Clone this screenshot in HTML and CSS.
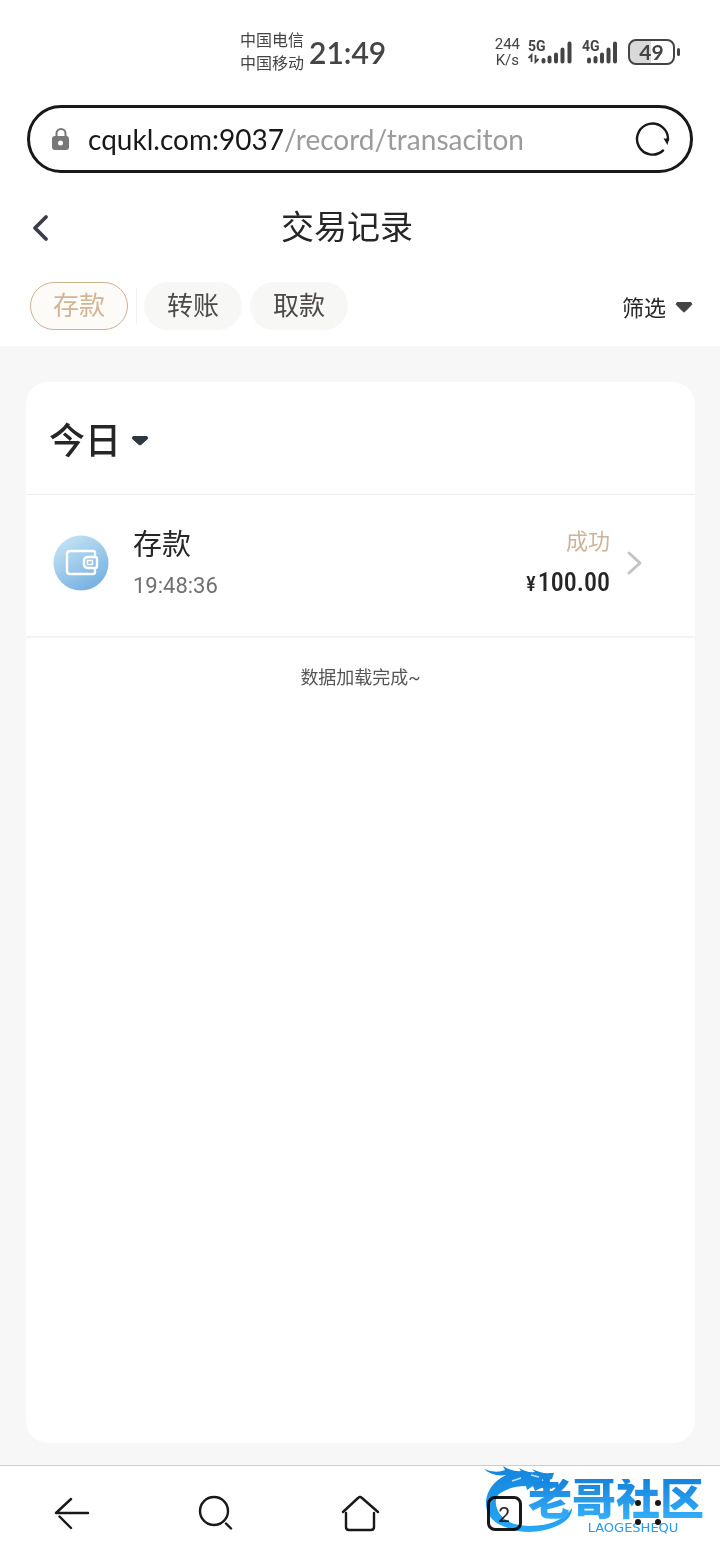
FILE: index.html
```html
<!DOCTYPE html>
<html lang="zh-CN">
<head>
<meta charset="utf-8">
<meta name="viewport" content="width=device-width, initial-scale=1">
<title>交易记录</title>
<link rel="stylesheet" href="styles.css">
</head>
<body>
<header class="top">
  <div class="status">
    <div class="carriers"><span>中国电信</span><span>中国移动</span></div>
    <time class="clock">21:49</time>
    <div class="indicators">
      <div class="speed"><span>244</span><span>K/s</span></div>
      <svg class="signal" width="46" height="28" viewBox="0 0 46 28" role="img" aria-label="5G">
        <text x="0" y="13" class="net">5G</text>
        <path d="M3.500 24v-7l-3 3M7.500 17v7l3-3" fill="none" stroke="#444" stroke-width="1.800"/>
        <path d="M15.500 22v1.500M21.500 19.500v4M28 16.500v7M34.500 11.500v12M41.500 5.500v18" stroke="#444" stroke-width="4" stroke-linecap="round"/>
      </svg>
      <svg class="signal" width="38" height="28" viewBox="0 0 38 28" role="img" aria-label="4G">
        <text x="0" y="13" class="net">4G</text>
        <path d="M7 21.500v2M13.500 20v3.500M20 16.500v7M26.500 11.500v12M33 5.500v18" stroke="#444" stroke-width="4" stroke-linecap="round"/>
      </svg>
      <div class="battery"><span>49</span></div>
    </div>
  </div>
  <button class="address" type="button">
    <svg width="20" height="24" viewBox="0 0 20 24" aria-hidden="true"><path d="M5.500 11V6.500a4.500 4.500 0 0 1 9 0V11" fill="none" stroke="#777" stroke-width="2"/><rect x="1" y="9" width="17" height="14" rx="3" fill="#777"/><circle cx="9.500" cy="16" r="2.500" fill="#fff"/></svg>
    <span class="url">cqukl.com:9037<span class="path">/record/transaciton</span></span>
    <svg width="36" height="36" viewBox="0 0 36 36" aria-hidden="true"><path d="M29 29.500A15.500 15.500 0 1 1 34 19" fill="none" stroke="#181818" stroke-width="2.400" stroke-linecap="round"/><path d="M29.500 17.500l5.500 0-1.500 6.500z" fill="#181818"/></svg>
  </button>
  <div class="titlebar">
    <button class="back" type="button" aria-label="返回"><svg width="20" height="30" viewBox="0 0 20 30"><path d="M16 4L5 15l11 11" fill="none" stroke="#3c3d4c" stroke-width="3.800" stroke-linecap="round" stroke-linejoin="round"/></svg></button>
    <h1>交易记录</h1>
  </div>
  <div class="filters">
    <button class="tab active" type="button">存款</button>
    <i class="divider"></i>
    <button class="tab" type="button">转账</button>
    <button class="tab" type="button">取款</button>
    <button class="filter" type="button">筛选<svg width="18" height="16" viewBox="0 0 18 16"><path d="M2 4.500h14l.8 2L10 13.500q-1 .8-2 0L1.200 6.500z" fill="#444" stroke="#444" stroke-linejoin="round"/></svg></button>
  </div>
</header>
<main>
  <section class="card">
    <h2><button class="day" type="button">今日<svg width="18" height="18" viewBox="0 0 18 18"><path d="M2 7.500h14l.8 2L10 15.500q-1 .8-2 0L1.200 9.500z" fill="#2d3840" stroke="#2d3840" stroke-linejoin="round"/></svg></button></h2>
    <a class="record" href="#">
      <svg width="56" height="56" viewBox="0 0 56 56" aria-hidden="true">
        <defs><linearGradient id="disc" x1="0.200" y1="0" x2="0.800" y2="1"><stop offset="0" stop-color="#c6e4f4"/><stop offset="1" stop-color="#71aee0"/></linearGradient></defs>
        <circle cx="28" cy="28" r="27.500" fill="url(#disc)"/>
        <path d="M42 22v-4q0-2-2-2H17q-3 0-3 3v17q0 3 3 3h23q2 0 2-2v-4M42 22h-7q-4 0-4 4v3q0 4 4 4h7q2 0 2-2v-7q0-2-2-2z" fill="none" stroke="#fff" stroke-width="2.400" stroke-linejoin="round"/>
        <rect x="34.500" y="25.500" width="5" height="4" fill="none" stroke="#fff" stroke-width="1.500"/>
      </svg>
      <div class="what"><strong>存款</strong><time>19:48:36</time></div>
      <div class="result"><span class="state">成功</span><span class="amount"><small>¥</small>100.00</span></div>
      <svg width="18" height="26" viewBox="0 0 18 26" aria-hidden="true"><path d="M3 3l11 10L3 23" fill="none" stroke="#c4c4c4" stroke-width="3" stroke-linecap="round" stroke-linejoin="round"/></svg>
    </a>
    <p class="done">数据加载完成~</p>
  </section>
</main>
<nav class="toolbar">
  <button type="button" aria-label="后退"><svg width="40" height="40" viewBox="0 0 40 40"><path d="M19 6L4 20h32M7.500 23.500L19 35"/></svg></button>
  <button type="button" aria-label="搜索"><svg width="40" height="40" viewBox="0 0 40 40"><circle cx="18" cy="18" r="14"/><path d="M30 30.500l5 5"/></svg></button>
  <button type="button" aria-label="主页"><svg width="40" height="40" viewBox="0 0 40 40"><path d="M3 19L18 5q2-2 4 0l16 14M6 20v14q0 3 3 3h22q3 0 3-3V20"/></svg></button>
  <button type="button" aria-label="标签页"><span class="count">2</span></button>
  <button type="button" aria-label="菜单"><svg width="40" height="40" viewBox="0 0 40 40"><g class="dots"><circle cx="10" cy="10" r="3"/><circle cx="30" cy="10" r="3"/><circle cx="10" cy="29" r="3"/><circle cx="30" cy="29" r="3"/></g></svg></button>
  <div class="brand">
    <svg width="92" height="70" viewBox="0 0 92 70" aria-hidden="true">
      <defs><linearGradient id="tail" x1="0" y1="0" x2="0" y2="1"><stop offset="0" stop-color="#1484dc"/><stop offset="1" stop-color="#28a8f6"/></linearGradient></defs>
      <path d="M0 3q12 5 21 1l-2-4q9 6 18 5l-2-3q8 5 16 4l-3-3q10 5 18 4l4 0-2 6-7 2 10 2-3 6q-9-3-13 0l-4 2-2-5-6 4-1-4q-16 0-27 8Q9 34 14 45q7 14 30 15 32 0 44-18 0 15-27 22-20 5-37-2Q1 55 2 35 4 18 22 9 9 11 0 3z" fill="url(#tail)"/>
      <path d="M47 9l8 2M28 15l9-3M58 14l6 1" stroke="#b9e2ff" stroke-width="1.500"/>
    </svg>
    <div class="words"><b>老哥社区</b><span>LAOGESHEQU</span></div>
  </div>
</nav>
</body>
</html>
```
FILE: styles.css
```css
* { box-sizing: border-box; }
body {
  margin: 0;
  min-height: 100vh;
  display: flex;
  flex-direction: column;
  background: #f7f7f7;
  color: #262626;
  font-family: Roboto, "Noto Sans CJK SC", sans-serif;
}
button { margin: 0; padding: 0; border: 0; background: none; color: inherit; font: inherit; }
svg { flex: none; }
h1, h2, p { margin: 0; font-weight: 400; }

.top { background: #fff; padding-bottom: 16px; }
.status {
  height: 105px;
  display: flex;
  align-items: center;
  padding: 0 45px 2px 240px;
  color: #444;
}
.carriers { display: flex; flex-direction: column; font-size: 16px; line-height: 23px; white-space: nowrap; }
.clock { margin-left: 5px; font: 600 30px Lato, sans-serif; }
.indicators { margin-left: auto; display: flex; align-items: center; gap: 8px; }
.speed { display: flex; flex-direction: column; align-items: center; font: 15px/16px Roboto, sans-serif; }
.net { font: 700 14px Roboto, sans-serif; fill: #444; }
.battery {
  position: relative;
  width: 47px;
  height: 26px;
  border: 2px solid #444;
  border-radius: 8px;
  background: linear-gradient(90deg, #d9d9d9 50%, #fff 50%);
  text-align: center;
  font: 700 21px/22px Lato, sans-serif;
}
.battery::after {
  content: "";
  position: absolute;
  right: -7px;
  top: 7px;
  width: 3px;
  height: 8px;
  border-radius: 2px;
  background: #444;
}

.address {
  display: flex;
  align-items: center;
  gap: 17px;
  width: calc(100% - 54px);
  height: 68px;
  margin: 0 27px;
  padding: 0 20px 0 21px;
  border: 3px solid #181818;
  border-radius: 34px;
  text-align: left;
}
.url { flex: 1; color: #181818; font: 28px Lato, sans-serif; white-space: nowrap; }
.path { color: #9b9b9b; }

.titlebar { display: flex; align-items: center; height: 109px; padding: 0 76px 0 30px; }
.back { display: flex; }
h1 { flex: 1; text-align: center; font-size: 33px; line-height: 48px; }

.filters { display: flex; align-items: center; gap: 8px; padding: 0 27px 0 30px; }
.tab { width: 98px; height: 48px; border-radius: 24px; background: #f7f7f6; color: #4b4a48; font-size: 26px; line-height: 46px; }
.tab.active { border: 1px solid #cbb294; background: #fdfbf8; color: #d1b596; line-height: 44px; }
.divider { width: 1px; height: 36px; margin-right: -1px; background: #f1f1f1; }
.filter { margin-left: auto; display: flex; align-items: center; gap: 9px; font-size: 22px; }

main { flex: 1; display: flex; padding: 36px 25px 22px 26px; }
.card { flex: 1; border-radius: 22px; background: #fff; }
h2 { display: flex; height: 113px; padding: 0 23px; border-bottom: 1px solid #ededed; }
.day { display: flex; align-items: center; gap: 10px; font-size: 36px; font-weight: 500; }
.record {
  display: flex;
  align-items: center;
  padding: 27px 51px 32px 27px;
  border-bottom: 2px solid #f3f3f3;
  color: inherit;
  text-decoration: none;
}
.what, .result { display: flex; flex-direction: column; }
.what { flex: 1; margin-left: 24px; }
.what strong { font-size: 29px; font-weight: 400; line-height: 46px; }
.what time { color: #707070; font-size: 22px; line-height: 36px; }
.result { align-items: flex-end; margin-right: 16px; }
.state { color: #ccb49a; font-size: 22px; line-height: 40px; }
.amount { font-family: "Roboto Condensed", Roboto, sans-serif; font-size: 26px; font-weight: 500; line-height: 40px; }
.amount small { margin-right: 2px; font-size: 20px; }
.done { padding-top: 25px; text-align: center; color: #555; font-size: 18px; line-height: 30px; }

.toolbar {
  position: relative;
  display: grid;
  grid-template-columns: repeat(5, 1fr);
  height: 95px;
  border-top: 1px solid #ccc;
  background: #fff;
}
.toolbar button { display: grid; place-items: center; }
.toolbar button svg { fill: none; stroke: #181818; stroke-width: 2.4px; stroke-linecap: round; stroke-linejoin: round; }
.toolbar .dots { fill: #181818; stroke: none; }
.count { width: 35px; height: 35px; border: 3px solid #181818; border-radius: 8px; font: 21px/29px Lato, sans-serif; }
.brand {
  position: absolute;
  top: 0;
  right: 16px;
  display: flex;
  mix-blend-mode: multiply;
  pointer-events: none;
}
.words { display: flex; flex-direction: column; align-items: center; margin: 13px 0 0 -48px; color: #249cf0; }
.words b { font-size: 44px; font-weight: 900; line-height: 42px; background: linear-gradient(#1583dc, #37b0fa); background-clip: text; color: transparent; }
.words span { margin-left: 34px; font: 13px/14px "DejaVu Sans", sans-serif; }
```
